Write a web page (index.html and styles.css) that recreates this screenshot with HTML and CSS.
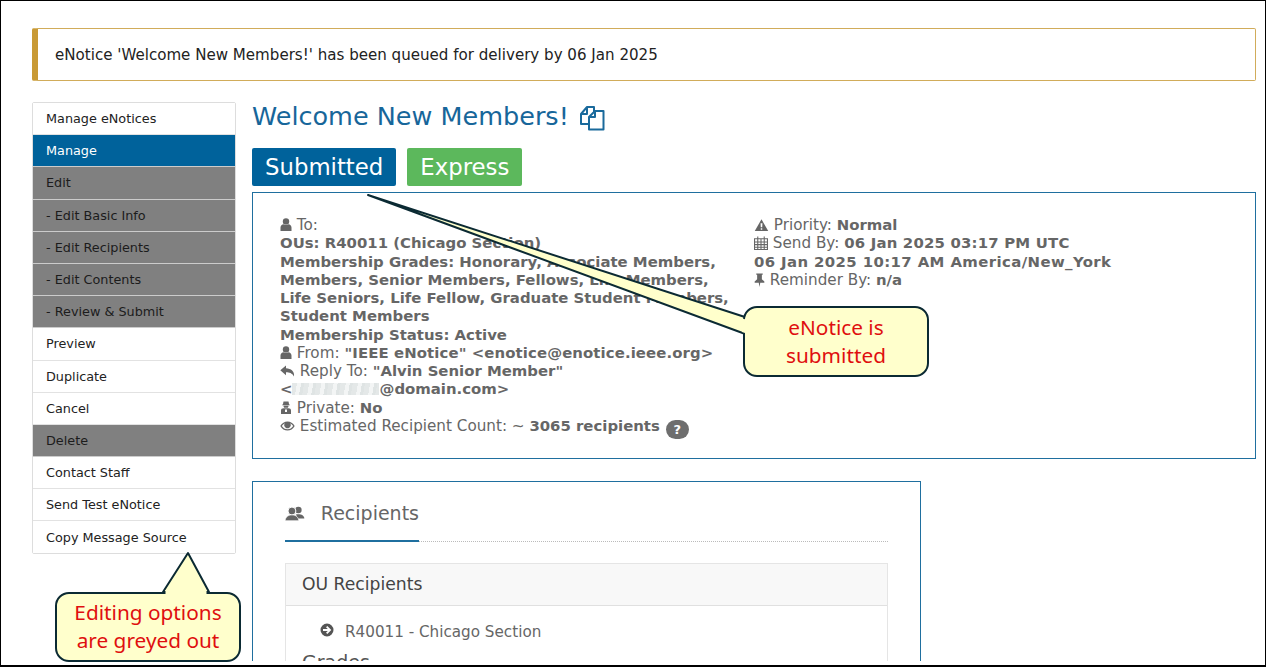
FILE: index.html
```html
<!DOCTYPE html>
<html lang="en">
<head>
<meta charset="utf-8">
<title>Welcome New Members!</title>
<link rel="stylesheet" href="styles.css">
</head>
<body>
<div class="frame">
  <div class="page">
    <div class="alert">eNotice 'Welcome New Members!' has been queued for delivery by 06 Jan 2025</div>
    <div class="layout">
      <nav class="menu">
        <a class="item">Manage eNotices</a>
        <a class="item active">Manage</a>
        <a class="item grey">Edit</a>
        <a class="item grey">- Edit Basic Info</a>
        <a class="item grey">- Edit Recipients</a>
        <a class="item grey">- Edit Contents</a>
        <a class="item grey">- Review &amp; Submit</a>
        <a class="item">Preview</a>
        <a class="item">Duplicate</a>
        <a class="item">Cancel</a>
        <a class="item grey">Delete</a>
        <a class="item">Contact Staff</a>
        <a class="item">Send Test eNotice</a>
        <a class="item">Copy Message Source</a>
      </nav>
      <main class="main">
        <h1 class="title">Welcome New Members!
          <svg class="copy-icon" viewBox="0 0 25 25" width="25" height="25"><path d="M14 6V1H7L1 8v10h7M7 1v7H1M15 5h8.500v18.500H9V11zM15 5v6H9" fill="none" stroke="#1a6a9c" stroke-width="2" stroke-linejoin="round"/></svg>
        </h1>
        <div class="badges"><span class="badge blue">Submitted</span><span class="badge green">Express</span></div>
        <section class="summary">
          <div class="col-left">
            <div><svg class="ic" viewBox="0 0 12 13"><circle cx="6" cy="3.400" r="3.200"/><path d="M.5 13V9.500C.5 7.500 2 6.500 3.500 6.300 4.500 7 7.500 7 8.500 6.300c1.500.2 3 1.200 3 3.200V13z"/></svg> To:</div>
            <div class="b">OUs: R40011 (Chicago Section)</div>
            <div class="b">Membership Grades: Honorary, Associate Members, Members, Senior Members, Fellows, Life Members, Life Seniors, Life Fellow, Graduate Student Members, Student Members</div>
            <div class="b">Membership Status: Active</div>
            <div><svg class="ic" viewBox="0 0 12 13"><circle cx="6" cy="3.400" r="3.200"/><path d="M.5 13V9.500C.5 7.500 2 6.500 3.500 6.300 4.500 7 7.500 7 8.500 6.300c1.500.2 3 1.200 3 3.200V13z"/></svg> From: <b class="mail">"IEEE eNotice" &lt;enotice@enotice.ieee.org&gt;</b></div>
            <div><svg class="ic wide" viewBox="0 0 15 12"><path d="M6 .5 .3 5.300 6 10.200V7.300c3.500 0 6 .8 8 4.200.8-5-3-8-8-8.200z"/></svg> Reply To: <b>"Alvin Senior Member"</b></div>
            <div class="b">&lt;<span class="blur"></span>@domain.com&gt;</div>
            <div><svg class="ic" viewBox="0 0 12 13"><path d="M3 3 3.500.5h5L9 3l1 1.200H2zM3.500 4.800h5a2.500 2.500 0 0 1-.7 2H4.200a2.500 2.500 0 0 1-.7-2zM1 13V9.500C1 8 2 7.300 3.500 7.200h5C10 7.300 11 8 11 9.500V13zM5 8.500v2.500h2V8.500z" fill-rule="evenodd"/></svg> Private: <b>No</b></div>
            <div><svg class="ic wide" viewBox="0 0 15 12"><path d="M.3 6C2 3 4.500 1.500 7.500 1.500S13 3 14.700 6C13 9 10.500 10.500 7.500 10.500S2 9 .3 6zm1.500 0c1.300 2 3.300 3.300 5.700 3.300S11.900 8 13.200 6c-.8-1.200-1.800-2.100-3-2.700a3.200 3.200 0 1 1-5.400 0C3.600 3.900 2.600 4.800 1.800 6z" fill-rule="evenodd"/></svg> Estimated Recipient Count: ~ <b>3065 recipients</b> <span class="help">?</span></div>
          </div>
          <div class="col-right">
            <div><svg class="ic wide" viewBox="0 0 15 13"><path d="M7.500 .3 14.800 13H.2zM6.500 4.500l.2 4.500h1.600l.2-4.500zM6.700 10v1.700h1.600V10z" fill-rule="evenodd"/></svg> Priority: <b>Normal</b></div>
            <div><svg class="ic cal" viewBox="0 0 13 13"><path d="M.5 2.500h12v10H.5zM.5 5.500h12M.5 8h12M.5 10.500h12M3.500 2.500v10M6.500 2.500v10M9.500 2.500v10M3.500 .5v2M9.500 .5v2" fill="none" stroke="#666" stroke-width="1"/></svg> Send By: <b class="date-a">06 Jan 2025 03:17 PM UTC</b></div>
            <div class="b date-b">06 Jan 2025 10:17 AM America/New_York</div>
            <div><svg class="ic narrow" viewBox="0 0 10 13"><path d="M2 .5h6v1.200H7.200v4L9.500 8v1H5.700L5 13 4.300 9H.5V8l2.300-2.300v-4H2z"/></svg> Reminder By: <b>n/a</b></div>
          </div>
        </section>
        <section class="card">
          <div class="tab-row">
            <div class="tab">
              <svg class="group" viewBox="0 0 20 15"><circle cx="13.500" cy="4" r="3.300"/><path d="M11 8.500c4-1 8.500.5 8.500 4H13z"/><circle cx="7" cy="5" r="4" stroke="#fff" stroke-width="1"/><path d="M.3 14.700c0-3.800 3-5.700 6.700-5.700s6.700 1.900 6.700 5.700z" stroke="#fff" stroke-width=".6"/></svg>
              <span>Recipients</span>
            </div>
          </div>
          <div class="panel">
            <div class="panel-head">OU Recipients</div>
            <div class="panel-body">
              <div class="ou"><svg class="arrow" viewBox="0 0 14 14"><path d="M7 .5a6.500 6.500 0 1 0 0 13 6.500 6.500 0 0 0 0-13zM7.300 3l4 4-4 4-1.300-1.300L7.800 8H3V6h4.800L6 4.300z" fill-rule="evenodd"/></svg><span>R40011 - Chicago Section</span></div>
              <div class="grades">Grades</div>
            </div>
          </div>
        </section>
      </main>
    </div>
  </div>
  <svg class="arrows" viewBox="0 0 1266 667" width="1266" height="667">
    <path d="M368 195 748 318 748 335Z" fill="#ffffcc" stroke="#0b2a33" stroke-width="2" stroke-linejoin="round"/>
    <path d="M188 553 209 592 163 592Z" fill="#ffffcc" stroke="#0b2a33" stroke-width="2" stroke-linejoin="round"/>
  </svg>
  <div class="callout c1">eNotice is<br>submitted</div>
  <div class="callout c2">Editing options<br>are greyed out</div>
  <svg class="arrows" viewBox="0 0 1266 667" width="1266" height="667">
    <path d="M742 318.500 752 321 752 333 748 334 742 332Z" fill="#ffffcc"/>
    <path d="M165.500 590 206.500 590 206.500 595 165.500 595Z" fill="#ffffcc"/>
  </svg>
</div>
</body>
</html>
```
FILE: styles.css
```css
* { box-sizing: border-box; }
html, body { margin: 0; padding: 0; background: #fff; }
body { font-family: "DejaVu Sans", Verdana, sans-serif; color: #666; }
.frame { position: relative; width: 1266px; height: 667px; border: 1px solid #000; border-width: 1px 1px 2px 1px; overflow: hidden; }
.page { height: 660px; padding: 27px 9px 0 31px; overflow: hidden; }
.alert { height: 53px; display: flex; align-items: center; padding: 1px 0 0 17px; border: 1px solid #d1ac5a; border-left: 6px solid #c99a35; border-radius: 2px; font-size: 15.080px; color: #222; }
.layout { display: flex; align-items: flex-start; margin-top: 21px; }
.menu { width: 204px; flex: none; display: flex; flex-direction: column; border: 1px solid #ddd; border-radius: 2px; margin-right: 16px; }
.item { display: flex; align-items: center; height: 32.200px; padding-left: 13px; font-size: 12.800px; color: #222; border-bottom: 1px solid #e2e2e2; background: #fff; }
.item:last-child { border-bottom: 0; height: 31.500px; }
.item.active { background: #00629b; color: #fff; border-bottom-color: #ccc; }
.item.grey { background: #808080; color: #1c1c1c; border-bottom-color: #ccc; }
.main { flex: 1; min-width: 0; }
.title { margin: 0; height: 33px; padding-bottom: 5px; display: flex; align-items: center; gap: 11px; font-size: 25.500px; font-weight: 400; color: #17669a; line-height: 30px; }
.copy-icon { flex: none; margin-top: 5px; }
.badges { display: flex; gap: 11px; margin-top: 13px; }
.badge { height: 38px; display: flex; align-items: center; padding: 0 13px; border-radius: 2px; color: #fff; font-size: 22.800px; }
.blue { background: #00629b; }
.green { background: #5cb85c; }
.summary { display: flex; margin-top: 6px; height: 267px; border: 1px solid #1f6f9f; padding: 23px 27px 0; font-size: 15.200px; line-height: 18.250px; color: #666; }
.col-left { width: 474px; flex: none; padding-right: 20px; }
.b, b { font-weight: 700; color: #666; font-size: 14.900px; }
.mail { letter-spacing: .1px; }
.date-a { letter-spacing: .2px; }
.date-b { letter-spacing: .4px; }
.col-right { flex: 1; }
.ic { width: 12px; height: 13px; fill: #666; vertical-align: -1px; }
.ic.wide { width: 15px; height: 12px; }
.ic.cal { width: 14px; height: 14px; vertical-align: -2px; }
.ic.narrow { width: 11px; height: 14px; vertical-align: -2px; }
.blur { display: inline-block; width: 87px; height: 12px; vertical-align: -1px; background: repeating-linear-gradient(100deg, #e4e8e8 0 5px, #f3f5f5 5px 9px, #dfe4e4 9px 12px); }
.help { display: inline-flex; width: 23px; height: 19px; border-radius: 10px; align-items: center; justify-content: center; background: #6e6e6e; color: #fff; font-size: 13px; font-weight: 700; vertical-align: -3px; margin-left: 1px; }
.card { width: 669px; margin-top: 22px; height: 260px; border: 1px solid #1f6f9f; border-bottom: 0; padding: 0 32px; }
.tab-row { height: 60px; border-bottom: 1px dotted #bbb; }
.tab { display: inline-flex; align-items: center; gap: 16px; height: 60px; width: 134px; padding-top: 4px; border-bottom: 2px solid #1f6f9f; font-size: 19px; color: #666; margin-bottom: -1px; }
.group { width: 20px; height: 15px; fill: #666; }
.panel { margin-top: 21px; border: 1px solid #e5e5e5; height: 200px; }
.panel-head { height: 42px; display: flex; align-items: center; padding: 0 0 2px 16px; background: #f8f8f8; border-bottom: 1px solid #e0e0e0; font-size: 17.200px; color: #444; }
.panel-body { padding: 17px 16px; }
.ou { display: flex; align-items: center; padding-left: 18px; gap: 11px; font-size: 15.200px; color: #666; }
.arrow { width: 14px; height: 14px; fill: #555; margin-top: -4px; }
.grades { margin-top: 10px; font-size: 19px; color: #555; }
.arrows { position: absolute; left: -1px; top: -1px; pointer-events: none; }
.callout { position: absolute; display: flex; align-items: center; justify-content: center; text-align: center; padding-bottom: 2px; background: #ffffcc; border: 2px solid #0b2a33; border-radius: 14px; color: #df0f0f; font-family: "Noto Sans", sans-serif; font-size: 20.800px; line-height: 28px; }
.c1 { left: 742px; top: 305px; width: 186px; height: 71px; }
.c2 { left: 54px; top: 591px; width: 186px; height: 70px; }
```
